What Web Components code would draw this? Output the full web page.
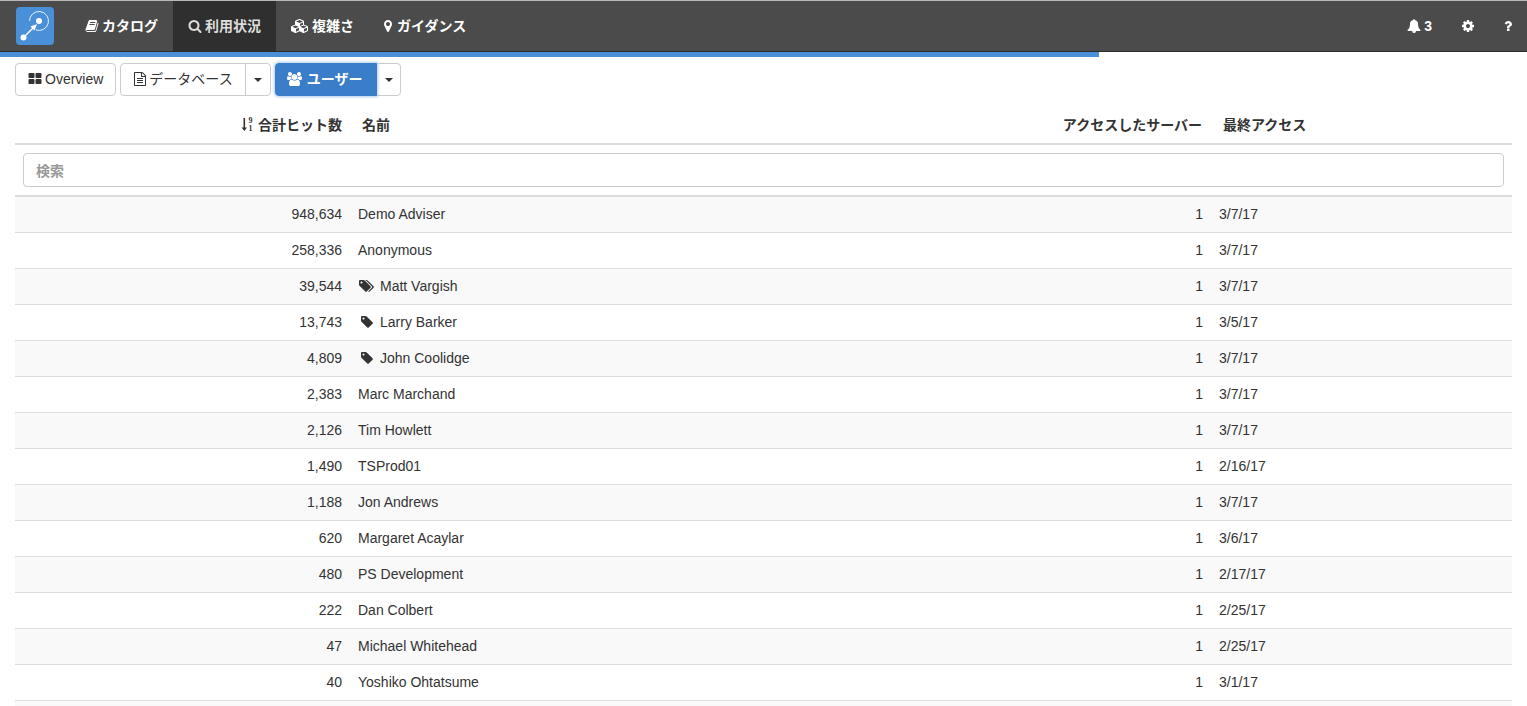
<!DOCTYPE html>
<html lang="ja">
<head>
<meta charset="UTF-8">
<title>利用状況</title>
<style>
  html, body { margin: 0; padding: 0; overflow: hidden; background: #fff; }
  body {
    height: 706px;
    font: 14px/20px "Liberation Sans", "Noto Sans CJK JP", sans-serif;
    color: #333;
  }
</style>
</head>
<body>
  <app-navbar>
    <nav-item icon="book">カタログ</nav-item>
    <nav-item icon="search" active>利用状況</nav-item>
    <nav-item icon="cubes">複雑さ</nav-item>
    <nav-item icon="marker" gap="5">ガイダンス</nav-item>
    <nav-item slot="right" icon="bell" gap="3" pad="0 13px 0 15px">3</nav-item>
    <nav-item slot="right" icon="cog" gap="0" pad="0 14px 0 16px"></nav-item>
    <nav-item slot="right" icon="question" gap="0" pad="0 15px 0 15px"></nav-item>
  </app-navbar>
  <progress-line value="1099"></progress-line>
  <view-toolbar>
    <tool-button icon="th">Overview</tool-button>
    <tool-button icon="file" gap="2" caret>データベース</tool-button>
    <tool-button icon="users" gap="5" caret primary>ユーザー</tool-button>
  </view-toolbar>
  <usage-table></usage-table>

<script>
  // Font Awesome 4 shapes, [viewBox width, path]
  const ICONS = {
    book: [1792, 'M1703 478q40 57 18 129l-275 906q-19 64-76.500 107.500t-122.500 43.500h-923q-77 0-148.500-53.500t-99.500-131.500q-24-67-2-127 0-4 3-27t4-37q1-8-3-21.500t-3-19.500q2-11 8-21t16.500-23.500 16.500-23.500q23-38 45-91.500t30-91.500q3-10 .5-30t-.5-28q3-11 17-28t17-23q21-36 42-92t25-90q1-9-2.500-32t.5-28q4-13 22-30.500t22-22.500q19-26 42.500-84.500t27.500-96.500q1-8-3-25.500t-2-26.500q2-8 9-18t18-23 17-21q8-12 16.500-30.500t15-35 16-36 19.500-32 26.500-23.500 36-11.500 47.500 5.500l-1 3q38-9 51-9h761q74 0 114 56t18 130l-274 906q-36 119-71.500 153.500t-128.500 34.500h-869q-27 0-38 15-11 16-1 43 24 70 144 70h923q29 0 56-15.500t35-41.500l300-987q7-22 5-57 38 15 59 43zm-1064 2q-4 13 2 22.500t20 9.500h608q13 0 25.500-9.500t16.500-22.500l21-64q4-13-2-22.500t-20-9.500h-608q-13 0-25.500 9.500t-16.500 22.500zm-83 256q-4 13 2 22.500t20 9.500h608q13 0 25.500-9.500t16.500-22.500l21-64q4-13-2-22.500t-20-9.500h-608q-13 0-25.500 9.500t-16.500 22.500z'],
    search: [1792, 'M1216 832q0-185-131.500-316.500t-316.500-131.500-316.500 131.500-131.500 316.500 131.500 316.500 316.500 131.500 316.500-131.500 131.500-316.500zm512 832q0 52-38 90t-90 38q-54 0-90-38l-343-342q-179 124-399 124-143 0-273.500-55.500t-225-150-150-225-55.500-273.500 55.500-273.500 150-225 225-150 273.500-55.500 273.500 55.500 225 150 150 225 55.500 273.500q0 220-124 399l343 343q37 37 37 90z'],
    cubes: [2304, 'M640 1632l384-192v-314l-384 164v342zm-64-454l404-173-404-173-404 173zm1088 454l384-192v-314l-384 164v342zm-64-454l404-173-404-173-404 173zm-448-293l384-165v-266l-384 164v267zm-64-379l441-189-441-189-441 189zm1088 518v416q0 36-19 67t-52 47l-448 224q-25 14-57 14t-57-14l-448-224q-4-2-7-4-2 2-7 4l-448 224q-25 14-57 14t-57-14l-448-224q-33-16-52-47t-19-67v-416q0-38 21.500-70t56.500-48l434-186v-400q0-38 21.500-70t56.500-48l448-192q23-10 50-10t50 10l448 192q35 16 56.500 48t21.500 70v400l434 186q36 16 57 48t21 70z'],
    marker: [1024, 'M768 640q0-106-75-181t-181-75-181 75-75 181 75 181 181 75 181-75 75-181zm256 0q0 109-33 179l-364 774q-16 33-47.500 52t-67.500 19-67.500-19-46.500-52l-365-774q-33-70-33-179 0-212 150-362t362-150 362 150 150 362z'],
    bell: [1792, 'M912 1696q0-16-16-16-59 0-101.500-42.500t-42.500-101.500q0-16-16-16t-16 16q0 73 51.500 124.500t124.500 51.500q16 0 16-16zm816-288q0 52-38 90t-90 38h-448q0 106-75 181t-181 75-181-75-75-181h-448q-52 0-90-38t-38-90q50-42 91-88t85-119.500 74.500-158.500 50-206 19.500-260q0-152 117-282.500t307-158.500q-8-19-8-39 0-40 28-68t68-28 68 28 28 68q0 20-8 39 190 28 307 158.500t117 282.500q0 139 19.500 260t50 206 74.500 158.500 85 119.500 91 88z'],
    cog: [1792, 'M1152 896q0-106-75-181t-181-75-181 75-75 181 75 181 181 75 181-75 75-181zm512-109v222q0 12-8 23t-20 13l-185 28q-19 54-39 91 35 50 107 138 10 12 10 25t-9 23q-27 37-99 108t-94 71q-12 0-26-9l-138-108q-44 23-91 38-16 136-29 186-7 28-36 28h-222q-14 0-24.500-8.500t-11.500-21.500l-28-184q-49-16-90-37l-141 107q-10 9-25 9-14 0-25-11-126-114-165-168-7-10-7-23 0-12 8-23 15-21 51-66.500t54-70.500q-27-50-41-99l-183-27q-13-2-21-12.500t-8-23.500v-222q0-12 8-23t19-13l186-28q14-46 39-92-40-57-107-138-10-12-10-24 0-10 9-23 26-36 98.500-107.500t94.500-71.500q13 0 26 10l138 107q44-23 91-38 16-136 29-186 7-28 36-28h222q14 0 24.500 8.500t11.500 21.500l28 184q49 16 90 37l142-107q9-9 24-9 13 0 25 10 129 119 165 170 7 8 7 22 0 12-8 23-15 21-51 66.500t-54 70.500q26 50 41 98l183 28q13 2 21 12.500t8 23.500z'],
    question: [1024, 'M704 1256v240q0 16-12 28t-28 12h-240q-16 0-28-12t-12-28v-240q0-16 12-28t28-12h240q16 0 28 12t12 28zm316-600q0 54-15.500 101t-35 76.500-55 59.500-57.500 43.500-61 35.500q-41 23-68.500 65t-27.500 67q0 17-12 32.500t-28 15.500h-240q-15 0-25.500-18.500t-10.500-37.500v-45q0-83 65-156.500t143-108.500q59-27 84-56t25-76q0-42-46.500-74t-107.500-32q-65 0-108 29-35 25-107 115-13 16-31 16-12 0-25-8l-164-125q-13-10-15.500-25t5.500-28q160-266 464-266 80 0 161 31t146 83 106 127.500 41 158.500z'],
    th: [1792, 'M832 1024v384q0 52-38 90t-90 38h-512q-52 0-90-38t-38-90v-384q0-52 38-90t90-38h512q52 0 90 38t38 90zm0-768v384q0 52-38 90t-90 38h-512q-52 0-90-38t-38-90v-384q0-52 38-90t90-38h512q52 0 90 38t38 90zm896 768v384q0 52-38 90t-90 38h-512q-52 0-90-38t-38-90v-384q0-52 38-90t90-38h512q52 0 90 38t38 90zm0-768v384q0 52-38 90t-90 38h-512q-52 0-90-38t-38-90v-384q0-52 38-90t90-38h512q52 0 90 38t38 90z'],
    file: [1792, 'M1596 380q28 28 48 76t20 88v1152q0 40-28 68t-68 28h-1344q-40 0-68-28t-28-68v-1600q0-40 28-68t68-28h896q40 0 88 20t76 48zm-444-244v376h376q-10-29-22-41l-313-313q-12-12-41-22zm384 1528v-1024h-416q-40 0-68-28t-28-68v-416h-768v1536h1280zm-1024-864q0-14 9-23t23-9h704q14 0 23 9t9 23v64q0 14-9 23t-23 9h-704q-14 0-23-9t-9-23v-64zm736 224q14 0 23 9t9 23v64q0 14-9 23t-23 9h-704q-14 0-23-9t-9-23v-64q0-14 9-23t23-9h704zm0 256q14 0 23 9t9 23v64q0 14-9 23t-23 9h-704q-14 0-23-9t-9-23v-64q0-14 9-23t23-9h704z'],
    users: [1920, 'M593 896q-162 5-265 128h-134q-82 0-138-40.500t-56-118.500q0-353 124-353 6 0 43.500 21t97.500 42.500 119 21.500q67 0 133-23-5 37-5 66 0 139 81 256zm1071 637q0 120-73 189.500t-194 69.500h-874q-121 0-194-69.500t-73-189.500q0-53 3.500-103.500t14-109 26.500-108.500 43-97.500 62-81 85.500-53.500 111.500-20q10 0 43 21.500t73 48 107 48 135 21.500 135-21.500 107-48 73-48 43-21.500q61 0 111.500 20t85.500 53.500 62 81 43 97.500 26.500 108.500 14 109 3.500 103.500zm-1024-1277q0 106-75 181t-181 75-181-75-75-181 75-181 181-75 181 75 75 181zm704 384q0 159-112.500 271.500t-271.500 112.500-271.500-112.500-112.500-271.500 112.500-271.500 271.500-112.500 271.500 112.500 112.500 271.500zm576 225q0 78-56 118.500t-138 40.500h-134q-103-123-265-128 81-117 81-256 0-29-5-66 66 23 133 23 59 0 119-21.500t97.500-42.500 43.500-21q124 0 124 353zm-128-609q0 106-75 181t-181 75-181-75-75-181 75-181 181-75 181 75 75 181z'],
    tag: [1664, 'M576 448q0-53-37.500-90.500t-90.500-37.500-90.500 37.500-37.500 90.500 37.500 90.500 90.500 37.500 90.500-37.500 37.500-90.500zm1067 576q0 53-37 90l-491 492q-39 37-91 37-53 0-90-37l-715-716q-38-37-64.500-101t-26.500-117v-416q0-52 38-90t90-38h416q53 0 117 26.500t102 64.500l715 714q37 39 37 91z'],
    tags: [1920, 'M448 448q0-53-37.500-90.500t-90.500-37.500-90.500 37.500-37.500 90.500 37.500 90.500 90.500 37.500 90.500-37.500 37.500-90.500zm1067 576q0 53-37 90l-491 492q-39 37-91 37-53 0-90-37l-715-716q-38-37-64.500-101t-26.500-117v-416q0-52 38-90t90-38h416q53 0 117 26.500t102 64.500l715 714q37 39 37 91zm384 0q0 53-37 90l-491 492q-39 37-91 37-36 0-59-14t-53-45l470-470q37-37 37-90 0-52-37-91l-715-714q-38-38-102-64.500t-117-26.500h224q53 0 117 26.500t102 64.500l715 714q37 39 37 91z']
  };

  function el(html) {
    const t = document.createElement('template');
    t.innerHTML = html;
    return t;
  }

  class FaIcon extends HTMLElement {
    connectedCallback() {
      const [w, d] = ICONS[this.getAttribute('name')];
      const size = +(this.getAttribute('size') || 14);
      if (!this.shadowRoot) this.attachShadow({mode: 'open'});
      this.shadowRoot.innerHTML = `
        <style>:host { display: inline-flex; } svg { display: block; fill: currentColor; }</style>
        <svg width="${size * w / 1792}" height="${size}" viewBox="0 0 ${w} 1792"><path d="${d}"/></svg>`;
    }
  }
  customElements.define('fa-icon', FaIcon);

  const navbarTpl = el(`
    <style>
      :host { display: block; border-top: 1px solid #b9b9b9; }
      .bar {
        display: flex;
        height: 50px;
        background: #4a4b4a;
        border-bottom: 1px solid #2b2c2c;
        padding-left: 15px;
        color: #fff;
      }
      .logo { width: 40px; height: 40px; margin: 5px 15px 0 0; flex: none; }
      .left { display: flex; }
      .right { display: flex; margin-left: auto; }
    </style>
    <div class="bar">
      <svg class="logo" viewBox="0 0 40 40">
        <rect x="1" y="1" width="38" height="38" rx="4" fill="#4a90d9"/>
        <path d="M14.500 15 A9.500 9.500 0 1 1 20.750 23.900" fill="none" stroke="#fff" stroke-opacity=".85" stroke-width="1"/>
        <circle cx="24" cy="15" r="3" fill="#fff"/>
        <circle cx="8.500" cy="31.500" r="3" fill="#fff"/>
        <path d="M8.500 31.500 L18 22" stroke="#fff" stroke-width="1.500"/>
        <path d="M22 18 L15.500 20.500 L19.500 24.500 Z" fill="#fff"/>
      </svg>
      <div class="left"><slot></slot></div>
      <div class="right"><slot name="right"></slot></div>
    </div>`);
  class AppNavbar extends HTMLElement {
    constructor() {
      super();
      this.attachShadow({mode: 'open'}).appendChild(navbarTpl.content.cloneNode(true));
    }
  }
  customElements.define('app-navbar', AppNavbar);

  class NavItem extends HTMLElement {
    constructor() {
      super();
      this.attachShadow({mode: 'open'});
    }
    connectedCallback() {
      const active = this.hasAttribute('active');
      const gap = this.getAttribute('gap') || 3;
      const pad = this.getAttribute('pad') || '0 15px';
      this.shadowRoot.innerHTML = `
        <style>
          :host { display: flex; align-items: center; height: 50px; padding: ${pad}; gap: ${gap}px;
                  font-weight: bold; color: ${active ? '#ddd' : '#fff'}; background: ${active ? '#2e2f2e' : 'none'}; }
        </style>
        <fa-icon name="${this.getAttribute('icon')}"></fa-icon><span><slot></slot></span>`;
    }
  }
  customElements.define('nav-item', NavItem);

  class ProgressLine extends HTMLElement {
    constructor() {
      super();
      this.attachShadow({mode: 'open'}).innerHTML = `
        <style>
          :host { display: block; height: 5px; }
          div { height: 100%; background: #4a90d9; width: ${this.getAttribute('value')}px; }
        </style><div></div>`;
    }
  }
  customElements.define('progress-line', ProgressLine);

  class ViewToolbar extends HTMLElement {
    constructor() {
      super();
      this.attachShadow({mode: 'open'}).innerHTML = `
        <style>:host { display: flex; gap: 4px; padding: 6px 15px 0; height: 33px; }</style><slot></slot>`;
    }
  }
  customElements.define('view-toolbar', ViewToolbar);

  class ToolButton extends HTMLElement {
    constructor() {
      super();
      this.attachShadow({mode: 'open'});
    }
    connectedCallback() {
      const caret = this.hasAttribute('caret');
      const primary = this.hasAttribute('primary');
      const gap = this.getAttribute('gap') || 3;
      this.shadowRoot.innerHTML = `
        <style>
          :host { display: flex; height: 33px; color: #333; }
          .b {
            box-sizing: border-box; display: flex; align-items: center; height: 33px;
            padding: 0 12px 2px; background: #fff; border: 1px solid #ccc; border-radius: 4px;
          }
          .main { gap: ${gap}px; }
          .main.split { border-radius: 4px 0 0 4px; }
          .drop { padding: 0; width: ${primary ? 25 : 26}px; justify-content: center; margin-left: -1px; border-radius: 0 4px 4px 0; }
          .drop i { width: 0; height: 0; border-top: 4px solid #333; border-left: 4px solid transparent; border-right: 4px solid transparent; }
          .primary {
            background: #3a7dc8; border-color: #3a7dc8; color: #fff; font-weight: bold; position: relative;
            box-shadow: 0 0 3px 1px #a9cdf0; border-radius: 2px 0 0 2px; padding-left: 11px; padding-right: 14px;
          }
        </style>
        <div class="b main ${caret ? 'split' : ''} ${primary ? 'primary' : ''}">
          <fa-icon name="${this.getAttribute('icon')}"></fa-icon><span><slot></slot></span>
        </div>
        ${caret ? '<div class="b drop"><i></i></div>' : ''}`;
    }
  }
  customElements.define('tool-button', ToolButton);

  const COLS = '335px 705px 156px 1fr';

  class UsageRow extends HTMLElement {
    constructor() {
      super();
      this.attachShadow({mode: 'open'});
    }
    connectedCallback() {
      const icon = this.getAttribute('tag');
      const even = this.hasAttribute('even');
      this.shadowRoot.innerHTML = `
        <style>
          :host { display: grid; grid-template-columns: ${COLS}; height: 33px; padding-bottom: 2px; align-items: center;
                  border-bottom: 1px solid #ddd; background: ${even ? '#fff' : '#f9f9f9'}; }
          div { padding: 0 8px; }
          .r { text-align: right; }
          .name { display: flex; align-items: center; }
          .tag { width: 12px; display: flex; justify-content: center; margin-right: 8px; margin-left: 2px; color: #333; }
        </style>
        <div class="r">${this.getAttribute('hits') || ''}</div>
        <div class="name">${icon ? `<span class="tag"><fa-icon name="${icon}"></fa-icon></span>` : ''}<span>${this.getAttribute('name') || ''}</span></div>
        <div class="r">${this.getAttribute('servers') || ''}</div>
        <div>${this.getAttribute('last') || ''}</div>`;
    }
  }
  customElements.define('usage-row', UsageRow);

  const USERS = [
    ['948,634', 'Demo Adviser', '', '3/7/17'],
    ['258,336', 'Anonymous', '', '3/7/17'],
    ['39,544', 'Matt Vargish', 'tags', '3/7/17'],
    ['13,743', 'Larry Barker', 'tag', '3/5/17'],
    ['4,809', 'John Coolidge', 'tag', '3/7/17'],
    ['2,383', 'Marc Marchand', '', '3/7/17'],
    ['2,126', 'Tim Howlett', '', '3/7/17'],
    ['1,490', 'TSProd01', '', '2/16/17'],
    ['1,188', 'Jon Andrews', '', '3/7/17'],
    ['620', 'Margaret Acaylar', '', '3/6/17'],
    ['480', 'PS Development', '', '2/17/17'],
    ['222', 'Dan Colbert', '', '2/25/17'],
    ['47', 'Michael Whitehead', '', '2/25/17'],
    ['40', 'Yoshiko Ohtatsume', '', '3/1/17']
  ];

  class UsageTable extends HTMLElement {
    constructor() {
      super();
      this.attachShadow({mode: 'open'});
      const rows = USERS.map((u, i) => {
        const tag = u[2] ? ` tag="${u[2]}"` : '';
        return `<usage-row hits="${u[0]}" name="${u[1]}"${tag} servers="1" last="${u[3]}"${i % 2 ? ' even' : ''}></usage-row>`;
      }).join('');
      this.shadowRoot.innerHTML = `
        <style>
          :host { display: block; margin: 9px 15px 0; }
          .head { display: grid; grid-template-columns: ${COLS}; height: 36px; padding-top: 2px; align-items: center;
                  font-weight: bold; border-bottom: 2px solid #ddd; white-space: nowrap; }
          .head div { padding: 0 12px; }
          .head .r { text-align: right; padding: 0 8px; }
          .head .r.wide { padding: 0 9px 0 0; }
          .sort { display: inline-block; vertical-align: -2px; margin-right: 4px; }
          .search { padding: 8px; border-bottom: 2px solid #ddd; height: 34px; }
          input {
            box-sizing: border-box; display: block; width: 100%; height: 34px; padding: 2px 12px 0;
            border: 1px solid #ccc; border-radius: 4px; font: inherit; color: #555; background: #fff;
          }
          input::placeholder { color: #999; font-weight: bold; opacity: 1; }
          .more { height: 35px; background: #f9f9f9; }
        </style>
        <div class="head">
          <div class="r"><svg class="sort" width="13" height="15" viewBox="0 0 13 15">
            <path d="M2.500 1 h1.600 v9.500 h1.900 l-2.700 3.500 -2.700-3.500 h1.900 z" fill="#333"/>
            <text x="7.500" y="6" font-family="Liberation Serif" font-size="8" font-weight="bold" fill="#333">9</text>
            <text x="7.500" y="14" font-family="Liberation Serif" font-size="8" font-weight="bold" fill="#333">1</text>
          </svg>合計ヒット数</div>
          <div>名前</div>
          <div class="r wide">アクセスしたサーバー</div>
          <div>最終アクセス</div>
        </div>
        <div class="search"><input placeholder="検索"></div>
        ${rows}
        <div class="more"></div>`;
    }
  }
  customElements.define('usage-table', UsageTable);
</script>
</body>
</html>
